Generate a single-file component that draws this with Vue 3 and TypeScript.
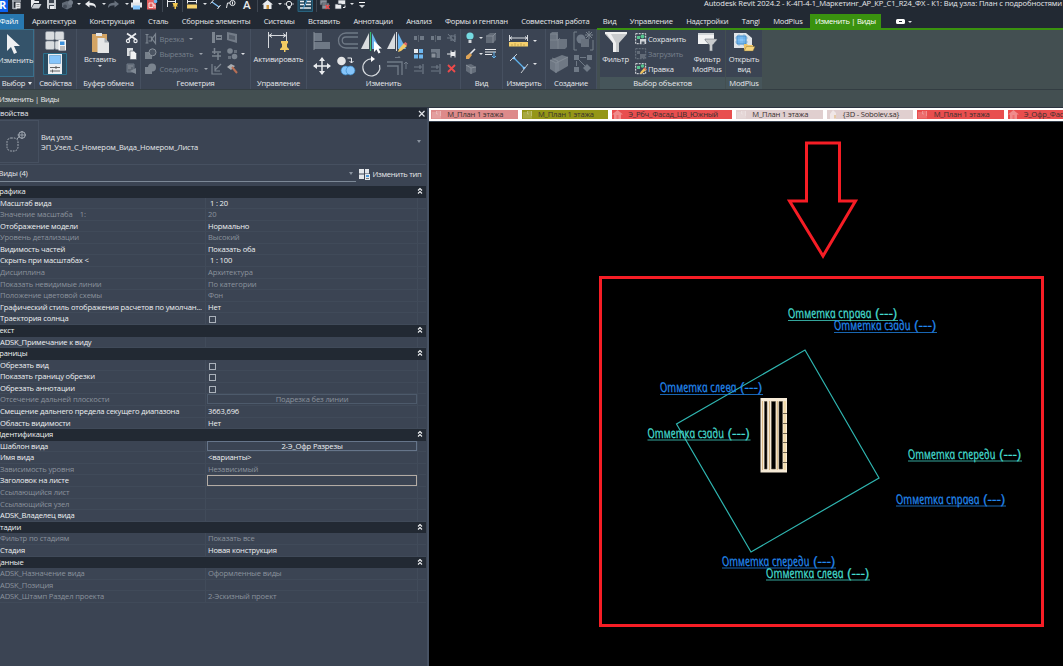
<script setup lang="ts">
import { h, type FunctionalComponent } from 'vue'

const W = '#e9ebee'
const G = '#6f7986'
const B = '#86c5fa'

interface Glyph { w: number; h: number; d: string }

const glyphs: Record<string, Glyph> = {
  doc: { w: 10, h: 12, d: `<path d="M0 1h9M1 0v9M1 8.500h4" stroke="#aab0b8" stroke-width="1.600" fill="none"/><path d="M3.500 2.500h5v6h-5z" fill="${W}"/><path d="M4.500 4.500h3M4.500 6.300h3" stroke="#555" stroke-width=".6"/>` },
  open: { w: 12, h: 12, d: `<path d="M1 8V0h3l1 1h4v2H4z" fill="${W}"/><path d="M4 4h7.500L9 8.500H1.500z" fill="#c5cad0"/>` },
  save: { w: 10, h: 12, d: `<path d="M0 0h9v9H1L0 8z" fill="#c9cdd2"/><path d="M2 0h5v3H2zM2 5h5v4H2z" fill="#3d4550"/><path d="M3 6h4v3H3z" fill="${W}"/>` },
  sync: { w: 12, h: 12, d: `<path d="M0 3l5-2 5 2v4L5 9.500 0 7z" fill="#626b77"/><circle cx="8.500" cy="2.500" r="2.500" fill="#737c88"/><circle cx="3" cy="6.500" r="2" fill="#444c58"/>` },
  undo: { w: 12, h: 12, d: `<path d="M0 4L4.500 .5v2.300C8 2.800 11 3.500 11 8 9.500 6 8 5.300 4.500 5.300v2.200z" fill="${W}"/>` },
  redo: { w: 12, h: 12, d: `<path d="M11 4L6.500 .5v2.300C3 2.800 0 3.500 0 8 1.500 6 3 5.300 6.500 5.300v2.200z" fill="#68717d"/>` },
  print: { w: 12, h: 12, d: `<path d="M2 0h7v3H2z" fill="#f3f4f5"/><path d="M0 2.500h11v5H0z" fill="#e3e5e8"/><path d="M2 5.500h7v4H2z" fill="${B}"/>` },
  pdf: { w: 11, h: 12, d: `<path d="M0 0h9v9.500H0z" fill="#e35e5e"/><path d="M2 3h4v4.500H2zM6 5h2v3" stroke="#fff" stroke-opacity=".8" fill="none"/><circle cx="8.500" cy="1.500" r="1.800" fill="#68b7f3"/>` },
  qdim: { w: 12, h: 12, d: `<path d="M.5 0v7M8.500 0v3M1 1.500h7" stroke="${W}" fill="none"/><path d="M5.500 3h5.500l-1 2.500 1 1H9v2.500H7.500V6.500H5.500l1-1z" fill="#f1c64d"/>` },
  qmeas: { w: 12, h: 12, d: `<path d="M.5 0v3.500M9.500 0v3.500M1 1.500h8" stroke="${W}"/><path d="M0 4.500h10v4H0z" fill="#f4d06b"/>` },
  qline: { w: 12, h: 12, d: `<path d="M2 2l7 5" stroke="${B}" stroke-width="1.200"/><path d="M3.500 0L.5 3.500M10.500 5L7.500 9" stroke="${W}"/>` },
  qtag: { w: 12, h: 12, d: `<circle cx="6.500" cy="3" r="2.600" stroke="${W}" fill="none"/><path d="M6.500 1.500v3M.5 8l1-5h2.500" stroke="${W}" fill="none"/>` },
  qhome: { w: 12, h: 12, d: `<path d="M5.500 0L0 4.500h1.500v4.500h8V4.500H11z" fill="${W}"/><path d="M4.500 5H7v4H4.500z" fill="#cf963d"/>` },
  qsec: { w: 10, h: 12, d: `<circle cx="4" cy="4" r="2.700" stroke="${W}" fill="none"/><path d="M-1 4h2M7 4h2M2.500 7h3L4 9.500z" fill="${W}" stroke="${W}" stroke-width=".7"/>` },
  qthin: { w: 15, h: 12, d: `<path d="M0 0h14.500v11.500H0z" fill="#1f4358" stroke="#28627d"/><path d="M2 1.500h4M9 1.500h4M2 4.500h4M8 4.500h5M2 8h11" stroke="${W}" stroke-width="1.400"/><path d="M9 0L5 9" stroke="#5ba9df"/>` },
  qclose: { w: 12, h: 12, d: `<path d="M0 0h7v5H0zM2 3h7v6H2z" fill="#8b929b" stroke="#353d48" stroke-width=".6"/><path d="M5.500 5l4 4M9.500 5l-4 4" stroke="#ea4848" stroke-width="1.400"/>` },
  qswitch: { w: 12, h: 12, d: `<path d="M3 0h7.500v4.500H3zM0 4h6.500v5H0z" fill="${W}" stroke="#353d48" stroke-width=".7"/><path d="M8 7.500h2V5.500" stroke="${W}" fill="none"/>` },
  cursor: { w: 16, h: 22, d: `<path d="M1 1v17l4-4 3 7 3-1.500-3-6.500h6z" fill="#eef0f2"/>` },
  types: { w: 22, h: 20, d: `<g fill="#d9dcdf" stroke="#858d97" stroke-width=".6"><rect x=".5" y=".5" width="9" height="8.500" rx="1.500"/><rect x="10" y=".5" width="9" height="8.500" rx="1.500"/><rect x=".5" y="10" width="9" height="8.500" rx="1.500"/><rect x="10" y="10" width="9" height="8.500" rx="1.500"/></g><path d="M13.500 9h7.500v10.500h-7.500z" fill="#f4f5f6"/><path d="M15 10.500h4.500v3.500H15z" fill="#3d91dc"/><path d="M15 16h5M15 18h5" stroke="#555" stroke-width=".7"/>` },
  props: { w: 24, h: 22, d: `<path d="M.5.5h23v21H.5z" fill="#294b60" stroke="#2c718e"/><path d="M5 1h14v20H5z" fill="#eceef0"/><path d="M6.500 2.500h11v8h-11z" fill="${B}" stroke="#4385ba" stroke-width=".5"/><path d="M7 14.500h10M7 18h10M13 13v3M9.500 16.500v3" stroke="#555" stroke-width=".9"/>` },
  paste: { w: 19, h: 22, d: `<path d="M1 2h15v18H1z" fill="#d3a464"/><path d="M5 1h6v3H5z" fill="#e4e6e8"/><path d="M6.500 6h7l4.500 4.500V21H6.500z" fill="#e5e6e7"/><path d="M13.500 6v4.500H18" fill="#aab0b7"/>` },
  cut: { w: 12, h: 12, d: `<path d="M1 1.500l9 6M10 1.500L2 7.500" stroke="${W}" stroke-width="1.700"/><circle cx="2" cy="9" r="1.600" stroke="${W}" stroke-width="1.200" fill="none"/><circle cx="9.500" cy="9" r="1.600" stroke="${W}" stroke-width="1.200" fill="none"/>` },
  copy2: { w: 12, h: 12, d: `<path d="M1 0h6v8H1z" fill="#d9dcdf"/><path d="M4 3h4l2.500 2.500V11.500H4z" fill="#f1f2f3" stroke="#59626e" stroke-width=".7"/>` },
  match: { w: 12, h: 12, d: `<path d="M1 1h7v8H1z" fill="#5d6672" stroke="${G}"/><path d="M4 8l6-3v6z" fill="#818a95"/><path d="M2 3h5M2 5h3" stroke="#a2a8b0" stroke-width=".7"/>` },
  cope: { w: 12, h: 12, d: `<path d="M.5 1.500h3M.5 10h3M2 1.500V10M3.500 4h3v4h-3M10.500 1L7 5.800l3.500 4.700z" stroke="#7c8590" stroke-width="1.200" fill="none"/>` },
  boolCut: { w: 12, h: 12, d: `<path d="M0 4h7v7H0z" fill="#78818c"/><circle cx="7.500" cy="4.300" r="3.500" fill="#4b5462" stroke="#8b939d"/>` },
  join: { w: 12, h: 12, d: `<path d="M0 4h7v7H0z" fill="#7b848f"/><circle cx="7" cy="4.500" r="4" fill="#7b848f"/>` },
  wall: { w: 12, h: 12, d: `<path d="M1 0h3v11H1zM5 3h6v5H5z" fill="#7b848f"/><path d="M10 5.500H6" stroke="#3b4453"/>` },
  face: { w: 12, h: 12, d: `<path d="M0 0l10 2v9L0 8z" fill="#737c88"/><path d="M2 2.500l6 1.500v4L2 7z" fill="#555e6b"/>` },
  beam: { w: 12, h: 12, d: `<path d="M1 4h9M1 8h9M3.500 0v6M7 5v7" stroke="#7b848f" stroke-width="1.500"/>` },
  paint: { w: 12, h: 12, d: `<circle cx="3" cy="3" r="2.800" fill="#7b848f"/><circle cx="7.500" cy="8.500" r="2.800" fill="#7b848f"/><path d="M7 2h3v3H7zM1 8h3v3H1z" fill="#67707c"/>` },
  split: { w: 12, h: 12, d: `<path d="M1 1v10h10M4 7l6-6M4 3v5h5" stroke="#7b848f" stroke-width="1.200" fill="none"/>` },
  hammer: { w: 12, h: 12, d: `<path d="M0 4l4-3 4 2-4 4z" fill="#a9adb1"/><path d="M5 4l5 6" stroke="#b86f54" stroke-width="2"/>` },
  activate: { w: 24, h: 22, d: `<path d="M1.500 1v16M19.500 1v10M2 4.500h17M5 2.500L2 4.500 5 6.500M16 2.500l3 2-3 2" stroke="#d5d8dc" fill="none"/><path d="M14 10h7v2l-1 1v3l2 2v1h-3.500v2h-1.500v-2H13v-1l2-2v-3l-1-1z" fill="#f2cb62"/>` },
  align: { w: 18, h: 18, d: `<path d="M1 1h8v8H1zM1 10h16v7H1z" fill="${G}"/><path d="M1 0v18" stroke="#89919b"/>` },
  offset: { w: 22, h: 18, d: `<path d="M21 1H9C-1 1-1 16 9 16h12M21 5H9c-5 0-5 7 0 7h12" stroke="${G}" stroke-width="1.300" fill="none"/>` },
  mirror: { w: 22, h: 22, d: `<path d="M8 1v16H0z" fill="#d9dcdf"/><path d="M11 1v16h8z" fill="#6bb4ee"/><path d="M9.500 0v19" stroke="#38bf70" stroke-width="1.200"/><path d="M13 9v11l2.500-2.500 2 4 2-1-2-4h3.500z" fill="#fff"/>` },
  mirrorDraw: { w: 22, h: 22, d: `<path d="M8 1v16H0z" fill="#d9dcdf"/><path d="M11 1v16h8z" fill="#6bb4ee"/><path d="M9.500 0v19" stroke="#d9dcdf"/><path d="M17 11l3 3-6 5-3 1 1-3z" fill="#f3ca66"/><path d="M16.500 11.500l2-1.500 2 2-1.500 1.500z" fill="#e46767"/>` },
  move: { w: 18, h: 20, d: `<path d="M9 2v16M1 10h16" stroke="${W}" stroke-width="1.500"/><path d="M6 5l3-4 3 4zM6 15l3 4 3-4zM4 7l-4 3 4 3zM14 7l4 3-4 3z" fill="${W}"/>` },
  copy: { w: 20, h: 20, d: `<circle cx="4.500" cy="5" r="4.300" fill="#e4e5e6"/><circle cx="8.500" cy="14.500" r="4.400" fill="${B}" stroke="#3b8bc8" stroke-width=".7"/><circle cx="13.500" cy="14.500" r="4.400" fill="${B}" stroke="#3b8bc8" stroke-width=".7"/><path d="M10.500 2h4v5M12.500 5l2 2 2-2" stroke="${W}" fill="none"/>` },
  rotate: { w: 22, h: 22, d: `<path d="M11 3A8.500 8.500 0 1 0 18.500 9" stroke="#d8dce0" stroke-width="1.200" fill="none"/><path d="M10 0l4 3-4 3z" fill="#fff"/>` },
  trim: { w: 22, h: 20, d: `<path d="M0 6h15v13M0 10h11v9" stroke="${G}" stroke-width="1.400" fill="none"/><path d="M8 1.500h5l-1.500-1.500M19 13V6l-2 2M19 6l2 2" stroke="${G}" fill="none"/>` },
  splitA: { w: 12, h: 12, d: `<path d="M1 4h3v4H1zM7 4h4v4H7z" fill="${G}"/><path d="M5.500 3v7" stroke="#59626e"/>` },
  unpin: { w: 12, h: 12, d: `<path d="M1 6h4M5 3v6M5 4h4v4H5M9 2v8M2 2l7 8" stroke="${G}" fill="none"/>` },
  array: { w: 12, h: 12, d: `<path d="M1 1h4v4H1z" fill="${W}"/><path d="M6 1h4v4H6zM1 6.500h4v4H1zM6 6.500h4v4H6z" fill="#6fb7ef"/>` },
  scale: { w: 12, h: 12, d: `<path d="M1 1h9v9H1z" fill="${G}"/><path d="M1 5h5v5H1z" fill="#89919b" stroke="#3b4453"/>` },
  pin: { w: 12, h: 12, d: `<path d="M1 6h4M5 2.500v7M9 2.500v7" stroke="${W}"/><path d="M5 4h4v4H5z" fill="${W}"/>` },
  ext: { w: 12, h: 12, d: `<path d="M10 1v10M1 4h8M1 8h8M7 2v4" stroke="${G}" stroke-width="1.200"/>` },
  del: { w: 12, h: 12, d: `<path d="M2 2l7 7M9 2L2 9" stroke="#ed4a4a" stroke-width="1.800"/>` },
  bulb: { w: 12, h: 12, d: `<circle cx="5" cy="4" r="3.600" fill="#75dbe2"/><path d="M3.500 8h3v3h-3z" fill="#d4d7db"/>` },
  cube: { w: 12, h: 12, d: `<path d="M1 4l4-3h6v7l-3 3H1z" fill="#626b77"/><path d="M1 4h7v7M8 4l3-3" stroke="#848c97" fill="none"/>` },
  brush: { w: 12, h: 12, d: `<path d="M10 1L5 6" stroke="${W}" stroke-width="1.600"/><path d="M5 5L1 8v3h3l3-4z" fill="#dfa456"/>` },
  lines: { w: 12, h: 12, d: `<path d="M0 1.500h11M0 4h11M0 6.500h7" stroke="${W}" stroke-width="1.100"/><path d="M9 4v6M7 8l2 2 2-2" stroke="#63b1eb" fill="none"/>` },
  box: { w: 12, h: 12, d: `<path d="M1 2l5-1 5 3v5l-5 2-5-3z" fill="#656e7a"/><path d="M1 2l5 3 5-1M6 5v6" stroke="#88909a" fill="none"/>` },
  measure: { w: 20, h: 20, d: `<path d="M.5 4v6M18.500 4v6M1 7h17M3 5.500L1 7l2 1.500M16 5.500L18 7l-2 1.500" stroke="#d9dce0" fill="none"/><path d="M0 11h19v4.500H0z" fill="#f5d06d"/><path d="M3 13v2.500M6 12v3.500M9 13v2.500M12 12v3.500M15 13v2.500" stroke="#a1873a" stroke-width=".6"/>` },
  dimline: { w: 20, h: 22, d: `<path d="M5 5l10 10" stroke="#5eb4ee" stroke-width="1.300"/><path d="M8 1L1 8M19 11l-7 9" stroke="#c9cdd2"/><circle cx="5" cy="5" r="1.300" fill="${B}"/><circle cx="15" cy="15" r="1.300" fill="${B}"/>` },
  group: { w: 20, h: 20, d: `<path d="M1 3l2-2h6v7h9v8l-2 2H1z" fill="#6b7480"/><path d="M1 9h8v9M9 9l2-2M1 3h7v6" stroke="#858d97" fill="none" stroke-width=".7"/>` },
  similar: { w: 21, h: 20, d: `<path d="M4 1H1v18h3M17 19h3V9" stroke="#77808b" fill="none"/><circle cx="8" cy="8" r="4.500" fill="${G}"/><path d="M8 8h8v8H8z" fill="#68717d"/><path d="M16 0v8M12 4h8M13 1l6 6M19 1l-6 6" stroke="#7b848f"/>` },
  assembly: { w: 20, h: 20, d: `<path d="M1 6l12-5 6 2v9L7 19l-6-4z" fill="#6f7884"/><path d="M1 6l6 3 12-6M7 9v10M3 4l6 3v10" stroke="#8b939d" stroke-width=".7" fill="none"/>` },
  parts: { w: 20, h: 20, d: `<path d="M1 1h5v5H1zM14 1h5v5h-5zM1 13h5v5H1zM14 10l4 4-4 4-4-4z" fill="${G}"/><path d="M7 3.500h6M3.500 7v5M5 5l7 7" stroke="${G}"/>` },
  funnel: { w: 22, h: 22, d: `<path d="M0 1h22v2l-8 9v9H8v-9L0 3z" fill="#c9cbcd"/><path d="M8 12L2 3h4l5 9v9H8z" fill="#efeff0"/><path d="M0 1h22v2H0z" fill="#f0f0f0"/>` },
  selSave: { w: 11, h: 12, d: `<path d="M.7.7h10v10H.7z" stroke="${W}" stroke-dasharray="2 1" fill="none"/><path d="M2 3h3v3H2z" fill="#57c38e"/><circle cx="7.500" cy="3.500" r="2" fill="#57c38e"/><path d="M5 6h6v5H5z" fill="#cfd3d8"/><path d="M6.500 8.500h3V11h-3z" fill="#4b5562"/>` },
  selLoad: { w: 11, h: 12, d: `<path d="M.7.7h10v10H.7z" stroke="${G}" stroke-dasharray="2 1" fill="none"/><path d="M2 3h3v3H2zM5 6h5v4H5z" fill="#626b77"/>` },
  selEdit: { w: 11, h: 12, d: `<path d="M.7.7h10v10H.7z" stroke="${W}" stroke-dasharray="2 1" fill="none"/><path d="M2 3h3v3H2z" fill="#57c38e"/><circle cx="7.500" cy="3" r="1.800" fill="#57c38e"/><path d="M9.500 4.500l2 2-4.500 4-2 .5.500-2z" fill="#f0c25c"/><path d="M9.500 4.500l2 2-1 .8-2-2z" fill="#e15d5d"/>` },
  funnelMod: { w: 19, h: 22, d: `<path d="M0 2h16v11H0z" fill="#f1f2f3"/><path d="M0 2h16v2H0z" fill="#d0d4d8"/><path d="M7 8h12v1l-4.500 5v6h-3v-6L7 9z" fill="#c9cbcd" stroke="#555e6b" stroke-width=".5"/>` },
  openView: { w: 22, h: 22, d: `<path d="M1 2h12l6 5v10H1z" fill="#e0e4e8"/><path d="M4 5h9v8H4z" fill="${B}" stroke="#3b86c5"/><path d="M2 7h13M2 11h13M6 3v12M11 3v12" stroke="#4f97cf" stroke-width=".5"/><path d="M11 19v-6h3l1 1h5v2z" fill="#efc567"/><path d="M11 20l2.500-4.500H22L20 20z" fill="#f7d57c" stroke="#7c6632" stroke-width=".4"/>` },
  typeEdit: { w: 12, h: 12, d: `<path d="M0 1h5v4.500H0zM6 1h4v4.500H6zM0 6.500h5V11H0zM6 6h5v6H6z" fill="#e3e6e9"/><path d="M7 7h3v2H7z" fill="#4a96d6"/><path d="M7 10.500h3" stroke="#777"/>` },
  callout: { w: 22, h: 24, d: `<rect x="2" y="8" width="11" height="13" rx="4" stroke="#aab1ba" stroke-dasharray="1.800 1" fill="none"/><path d="M12 9l2.500-3" stroke="#aab1ba"/><circle cx="17" cy="5" r="3.300" stroke="#aab1ba" fill="none"/><path d="M12.500 5H21M17 1v8" stroke="#aab1ba" stroke-width=".8"/>` },
  plan: { w: 11, h: 9, d: `<path d="M1 2h4v6.500H1zM5 1h5v7.500H5z" fill="#fff" fill-opacity=".18"/><path d="M5.500 1v3h1.500M9.500 1v5" stroke="#fff" stroke-opacity=".3" stroke-width=".8" fill="none"/>` },
  elev: { w: 11, h: 9, d: `<path d="M5.500 0L0 4.500h2V9h7V4.500h2z" fill="#fff" fill-opacity=".35"/><path d="M4.500 5h2v4h-2z" fill="#e95b5b" fill-opacity=".6"/>` },
  three: { w: 11, h: 9, d: `<path d="M6 0L3 4v5h6V3z" fill="#fff" fill-opacity=".5"/><path d="M7 5h2v3.500H7z" fill="#e3c396" fill-opacity=".8"/>` },
}

const Ico: FunctionalComponent<{ n: string }> = (p) => {
  const g = glyphs[p.n]
  return h('svg', { class: 'ico', width: g.w, height: g.h, viewBox: `0 0 ${g.w} ${g.h}`, innerHTML: g.d })
}
Ico.props = ['n']

const quick: string[] = ['doc', 'open', 'save', 'sync', '>', 'undo', '>', 'redo', '>', 'print', 'pdf', '|', 'qdim', '|', 'qmeas', '>', 'qline', 'qtag', 'A', '|', 'qhome', '>', 'qsec', 'qthin', '|', 'qclose', 'qswitch', '>', '=']

const tabs: string[] = ['Архитектура', 'Конструкция', 'Сталь', 'Сборные элементы', 'Системы', 'Вставить', 'Аннотации', 'Анализ', 'Формы и генплан', 'Совместная работа', 'Вид', 'Управление', 'Надстройки', 'Tangl', 'ModPlus']

const geometry = [
  { icon: 'cope', text: 'Врезка' },
  { icon: 'boolCut', text: 'Вырезать' },
  { icon: 'join', text: 'Соединить' },
]
const modifyBig = ['align', 'offset', 'mirror', 'mirrorDraw', 'move', 'copy', 'rotate', 'trim']
const modifySmall = ['splitA', 'splitA', 'unpin', 'array', 'scale', 'pin', 'ext', 'ext', 'del']

interface Row { k: string; v?: string; kind?: 'head' | 'check' | 'button' | 'input'; off?: boolean; pad?: boolean }
const rows: Row[] = [
  { k: 'Графика', kind: 'head' },
  { k: 'Масштаб вида', v: '1 : 20', pad: true },
  { k: 'Значение масштаба    1:', v: '20', off: true },
  { k: 'Отображение модели', v: 'Нормально' },
  { k: 'Уровень детализации', v: 'Высокий', off: true },
  { k: 'Видимость частей', v: 'Показать оба' },
  { k: 'Скрыть при масштабах <', v: '1 : 100', pad: true },
  { k: 'Дисциплина', v: 'Архитектура', off: true },
  { k: 'Показать невидимые линии', v: 'По категории', off: true },
  { k: 'Положение цветовой схемы', v: 'Фон', off: true },
  { k: 'Графический стиль отображения расчетов по умолчан...', v: 'Нет' },
  { k: 'Траектория солнца', kind: 'check' },
  { k: 'Текст', kind: 'head' },
  { k: 'ADSK_Примечание к виду' },
  { k: 'Границы', kind: 'head' },
  { k: 'Обрезать вид', kind: 'check' },
  { k: 'Показать границу обрезки', kind: 'check' },
  { k: 'Обрезать аннотации', kind: 'check' },
  { k: 'Отсечение дальней плоскости', v: 'Подрезка без линии', kind: 'button', off: true },
  { k: 'Смещение дальнего предела секущего диапазона', v: '3663,696' },
  { k: 'Область видимости', v: 'Нет' },
  { k: 'Идентификация', kind: 'head' },
  { k: 'Шаблон вида', v: '2-Э_Офр Разрезы', kind: 'button' },
  { k: 'Имя вида', v: '<варианты>' },
  { k: 'Зависимость уровня', v: 'Независимый', off: true },
  { k: 'Заголовок на листе', kind: 'input' },
  { k: 'Ссылающийся лист', off: true },
  { k: 'Ссылающийся узел', off: true },
  { k: 'ADSK_Владелец вида' },
  { k: 'Стадии', kind: 'head' },
  { k: 'Фильтр по стадиям', v: 'Показать все', off: true },
  { k: 'Стадия', v: 'Новая конструкция' },
  { k: 'Данные', kind: 'head' },
  { k: 'ADSK_Назначение вида', v: 'Оформленные виды', off: true },
  { k: 'ADSK_Позиция', off: true },
  { k: 'ADSK_Штамп Раздел проекта', v: '2-Эскизный проект', off: true },
]

const views = [
  { t: 'М_План 1 этажа', c: 'pink', i: 'plan' },
  { t: 'М_План 1 этажа', c: 'olive', i: 'plan' },
  { t: 'Э_Рбч_Фасад_ЦВ_Южный', c: 'red wide', i: 'elev' },
  { t: 'М_План 1 этажа', c: 'pale', i: 'plan' },
  { t: '{3D - Sobolev.sa}', c: 'pale', i: 'three' },
  { t: 'М_План 1 этажа', c: 'red', i: 'plan' },
  { t: 'Э_Офр_Фасад_ЦВ', c: 'red last', i: 'elev' },
]

const CY = '#45dccf'
const BL = '#2288ee'
const marks = [
  { t: 'справа', x: 788, y: 318, w: 110, c: CY },
  { t: 'сзади', x: 834, y: 330, w: 103, c: BL },
  { t: 'слева', x: 660, y: 392, w: 103, c: BL },
  { t: 'сзади', x: 647.500, y: 437.500, w: 103, c: CY },
  { t: 'спереди', x: 908, y: 458.500, w: 114, c: CY },
  { t: 'справа', x: 896, y: 503.500, w: 110, c: BL },
  { t: 'спереди', x: 722, y: 565.500, w: 114, c: BL },
  { t: 'слева', x: 766, y: 577.500, w: 104, c: CY },
]
</script>

<template>
  <div class="app">
    <header class="title">
      <b class="logo">R</b>
      <div class="quick">
        <template v-for="(q, i) in quick" :key="i">
          <i v-if="q === '>'" class="caret" />
          <i v-else-if="q === '|'" class="sep" />
          <span v-else-if="q === 'A'" class="letter">A</span>
          <i v-else-if="q === '='" class="more" />
          <Ico v-else :n="q" />
        </template>
      </div>
      <span class="caption">Autodesk Revit 2024.2 - К-4П-4-1_Маркетинг_АР_КР_С1_R24_ФХ - К1: Вид узла: План с подробностями</span>
    </header>

    <nav class="tabs">
      <span class="file">Файл</span>
      <span v-for="t in tabs" :key="t">{{ t }}</span>
      <span class="active">Изменить | Виды</span>
      <span class="cam"><i class="pill" /><i class="caret" /></span>
    </nav>

    <section class="ribbon">
      <div class="panel p1">
        <div class="body sel"><Ico n="cursor" /><span class="lb">Изменить</span></div>
        <footer>Выбор <i class="caret" /></footer>
      </div>
      <div class="panel p2">
        <div class="body stack"><Ico n="types" /><Ico n="props" /></div>
        <footer>Свойства</footer>
      </div>
      <div class="panel p3">
        <div class="body row">
          <div class="big"><Ico n="paste" /><span class="lb">Вставить</span><i class="caret" /></div>
          <div class="col"><Ico n="cut" /><Ico n="copy2" /><Ico n="match" /></div>
        </div>
        <footer>Буфер обмена</footer>
      </div>
      <div class="panel p4">
        <div class="body row">
          <div class="list">
            <span v-for="g in geometry" :key="g.text" class="item off"><Ico :n="g.icon" />{{ g.text }}<i class="caret" /></span>
          </div>
          <div class="col"><Ico n="wall" /><Ico n="beam" /><Ico n="split" /></div>
          <div class="col"><Ico n="face" /><span class="pair"><Ico n="paint" /><i class="caret" /></span><Ico n="hammer" /></div>
        </div>
        <footer>Геометрия</footer>
      </div>
      <div class="panel p5">
        <div class="body big"><Ico n="activate" /><span class="lb">Активировать</span></div>
        <footer>Управление</footer>
      </div>
      <div class="panel p6">
        <div class="body row">
          <div class="bigs"><Ico v-for="m in modifyBig" :key="m" :n="m" /></div>
          <div class="smalls"><Ico v-for="(m, i) in modifySmall" :key="i" :n="m" /></div>
        </div>
        <footer>Изменить</footer>
      </div>
      <div class="panel p7">
        <div class="body row">
          <div class="col"><span class="pair"><Ico n="bulb" /><i class="caret" /></span><span class="pair"><Ico n="brush" /><i class="caret" /></span><Ico n="box" /></div>
          <div class="col"><Ico n="cube" /><Ico n="lines" /></div>
        </div>
        <footer>Вид</footer>
      </div>
      <div class="panel p8">
        <div class="body stack2">
          <span class="pair"><Ico n="measure" /><i class="caret" /></span>
          <span class="pair"><Ico n="dimline" /><i class="caret" /></span>
        </div>
        <footer>Измерить</footer>
      </div>
      <div class="panel p9">
        <div class="body create"><Ico n="group" /><Ico n="similar" /><Ico n="assembly" /><Ico n="parts" /></div>
        <footer>Создание</footer>
      </div>
      <div class="panel ctx p10">
        <div class="body row">
          <div class="big"><Ico n="funnel" /><span class="lb">Фильтр</span></div>
          <div class="list">
            <span class="item"><Ico n="selSave" />Сохранить</span>
            <span class="item off"><Ico n="selLoad" />Загрузить</span>
            <span class="item"><Ico n="selEdit" />Правка</span>
          </div>
          <div class="big mod"><Ico n="funnelMod" /><span class="lb">Фильтр<br>ModPlus</span></div>
        </div>
        <footer>Выбор объектов</footer>
      </div>
      <div class="panel ctx p11">
        <div class="body big"><Ico n="openView" /><span class="lb">Открыть<br>вид</span></div>
        <footer>ModPlus</footer>
      </div>
    </section>

    <div class="options">Изменить | Виды</div>

    <main class="work">
      <aside class="props">
        <div class="phead"><span>Свойства</span><svg width="8" height="8" viewBox="0 0 8 8"><path d="M1 1l5.500 5.500M6.500 1L1 6.500" stroke="#e3e6ea" stroke-width="1.200" /></svg></div>
        <div class="ptype">
          <div class="thumb"><Ico n="callout" /></div>
          <div class="tname">Вид узла<br>ЭП_Узел_С_Номером_Вида_Номером_Листа</div>
          <i class="caret dim" />
        </div>
        <div class="pfilter">
          <div class="combo"><span>Виды (4)</span><i class="caret dim" /></div>
          <div class="edit"><Ico n="typeEdit" />Изменить тип</div>
        </div>
        <div class="grid">
          <div v-for="(r, i) in rows" :key="i" class="prow" :class="[r.kind, { off: r.off }]">
            <template v-if="r.kind === 'head'">
              <span class="hk">{{ r.k }}</span>
              <svg width="6" height="8" viewBox="0 0 6 8"><path d="M1 3.500L3 1.500l2 2M1 6.500l2-2 2 2" stroke="#f0f2f4" stroke-width="1.100" fill="none" /></svg>
            </template>
            <template v-else>
              <span class="k">{{ r.k }}</span>
              <span class="v" :class="{ pad: r.pad }">
                <i v-if="r.kind === 'check'" class="box" />
                <span v-else-if="r.kind === 'button'" class="btn">{{ r.v }}</span>
                <span v-else-if="r.kind === 'input'" class="inp" />
                <template v-else>{{ r.v }}</template>
              </span>
              <span class="e" />
            </template>
          </div>
        </div>
      </aside>

      <section class="canvas">
        <div class="vtabs">
          <span v-for="(v, i) in views" :key="i" class="vtab" :class="v.c"><Ico :n="v.i" /><em>{{ v.t }}</em></span>
        </div>
        <svg class="draw" width="634" height="544" viewBox="429 122 634 544">
          <path d="M806.500 143H839.500V201H855.500L823 256 789.500 201H806.500z" fill="none" stroke="#f61d25" stroke-width="3" />
          <rect x="600.500" y="277.500" width="442" height="348" fill="none" stroke="#f61d25" stroke-width="3" />
          <path d="M805 350L879 478 751 552 676.500 424z" fill="none" stroke="#2fb5b0" stroke-width="1.200" />
          <rect x="760.500" y="398" width="26.500" height="74.500" fill="#f6ead6" />
          <path d="M764.500 401.500V469H767V401.500zM771.500 401.500V469H775.500V401.500zM779 401.500V469H782.500V401.500z" fill="#000" stroke="#5b5245" stroke-width=".6" />
          <path d="M762.500 401V470M769.500 401V470M777.300 401V470" stroke="#d9b985" stroke-width="1" />
          <path d="M784.700 401V470" stroke="#f1d9a6" stroke-width="2.200" />
          <path d="M782.500 413.500h4.500M782.500 423.500h4.500M782.500 433.500h4.500M782.500 442.500h4.500M782.500 452.500h4.500M782.500 462.500h4.500" stroke="#6c6253" />
          <g v-for="(m, i) in marks" :key="i" :fill="m.c" :stroke="m.c">
            <text class="mark" :transform="`translate(${m.x + .8} ${m.y}) skewX(12)`" :textLength="m.w - 26.500" lengthAdjust="spacingAndGlyphs">Отметка {{ m.t }}</text>
            <text class="mark" :transform="`translate(${m.x + m.w - 22} ${m.y}) skewX(12)`" textLength="22" lengthAdjust="spacingAndGlyphs">(---)</text>
            <path :d="`M${m.x} ${m.y + 2.500}h${m.w}`" stroke-opacity=".75" stroke-width="1.200" />
          </g>
        </svg>
      </section>
    </main>
  </div>
</template>

<style>
body { margin: 0; background: #000; }
.ico { display: block; flex: none; overflow: visible; }
</style>

<style scoped>
.app { width: 1063px; height: 666px; overflow: hidden; display: flex; flex-direction: column; font: 7.6px/10px "Open Sans", "Noto Sans", sans-serif; letter-spacing: -0.2px; color: #e6e8eb; background: #3b4453; white-space: nowrap; }
.caret { display: inline-block; flex: none; width: 0; height: 0; border: 2px solid transparent; border-top: 2.500px solid #dfe2e6; border-bottom: 0; }
.caret.dim { border-top-color: #8a939f; border-width: 3px 2.500px 0; }

.title { height: 14px; flex: none; display: flex; background: #222933; }
.logo { width: 8px; height: 12px; flex: none; background: #0b62f0; color: #fff; font-size: 11px; line-height: 9px; text-indent: -1px; }
.quick { width: 359px; flex: none; box-sizing: border-box; padding-left: 4px; display: grid; height: 12px; align-items: start; justify-items: start; grid-template-columns: 18px 17px 15px 14px 9px 16px 7px 16px 7px 16px 15px 5px 15px 5px 15px 8px 16px 17px 14px 5px 15px 8px 13px 18px 4px 15px 14px 10px 6px; }
.quick .caret { margin: 3px 0 0 1px; }
.sep { width: 1px; height: 12px; background: #3e4651; }
.letter { font-size: 11.500px; line-height: 9px; font-weight: 600; }
.more { width: 6px; height: 2px; margin-top: 2px; border-top: 1px solid #fff; border-bottom: 3px solid #cfd3d8; clip-path: polygon(0 0, 100% 0, 100% 20%, 100% 50%, 50% 100%, 0 50%); }
.caption { margin-left: 337px; flex: none; font-size: 7.600px; line-height: 7px; letter-spacing: -0.1px; }

.tabs { height: 15px; flex: none; background: #222933; display: flex; align-items: stretch; gap: 13.350px; line-height: 15px; overflow: hidden; }
.file { width: 24px; background: #2878b0; margin-right: -5.350px; color: #fff; text-indent: -.5px; }
.active { background: #3a920f; color: #fff; padding: 0 5px; margin: 0 0 0 -6px; letter-spacing: -.28px; }
.cam { display: flex; align-items: center; gap: 3px; margin-left: 1.500px; }
.pill { width: 3px; height: 1px; border: 2px solid #fff; border-width: 2px 3px; border-radius: 1.500px; background: #222933; }

.ribbon { height: 61px; flex: none; display: flex; background: linear-gradient(90deg, #3b4453 597px, #434f51 597px); border-bottom: 1px solid #333d42; box-sizing: border-box; position: relative; }
.ribbon::after { content: ""; position: absolute; left: 597px; right: 0; top: -1px; height: 2px; background: #3a920f; }
.panel { box-sizing: border-box; flex: none; border-right: 1px solid #465060; display: flex; flex-direction: column; }
.panel footer { height: 12px; line-height: 13px; text-align: center; display: flex; justify-content: center; align-items: center; gap: 3px; }
.body { height: 48px; box-sizing: border-box; padding-top: 2px; display: flex; }
.p1 { width: 35px; } .p2 { width: 42px; } .p3 { width: 64px; } .p4 { width: 110px; } .p5 { width: 56px; }
.p6 { width: 154px; } .p7 { width: 42px; } .p8 { width: 43px; } .p9 { width: 51px; }
.p10 { width: 126px; margin-left: 3px; } .p11 { width: 37px; }
.ctx { border-right-color: #434f51; }
.ctx .body { background: #3b4453; }
.ctx footer { background: #46555a; }
.sel { background: #34536a; border: 1px solid #39708d; border-left: 0; flex-direction: column; align-items: center; }
.sel .ico { margin: 1px 0 0 -5px; }
.sel .lb { margin: 0 0 0 -2px; }
.p1 footer .caret { border-width: 3px 2.500px 0; }
.stack { flex-direction: column; align-items: center; gap: 2px; }
.stack .ico:last-child { margin-left: -1px; }
.big { display: flex; flex-direction: column; align-items: center; }
.big .lb { margin-top: 2px; line-height: 9.500px; text-align: center; }
.p3 .big { width: 46px; padding-top: 1px; }
.p3 .lb { margin-top: 1px; }
.col { display: flex; flex-direction: column; gap: 3.600px; padding-top: 1px; }
.p3 .col { margin-left: 3px; }
.list { display: flex; flex-direction: column; }
.item { height: 15.500px; display: flex; align-items: center; gap: 2.500px; }
.item .caret { margin-left: 3px; }
.off { color: #77808c; }
.off .caret { border-top-color: #9ba2ab; }
.p4 .list { width: 66px; padding-left: 4px; }
.p4 .col { width: 16px; }
.pair { display: flex; align-items: center; gap: 2px; }
.p6 .bigs { display: grid; grid-template-columns: 24px 24px 26px 25px; grid-template-rows: 23px 22px; padding: 1px 0 0 6px; }
.p6 .bigs .ico:nth-child(n+5) { margin-top: 1px; }
.p6 .smalls { display: grid; grid-template-columns: repeat(3, 16.500px); grid-template-rows: repeat(3, 15.600px); padding: 1px 0 0 1px; }
.p7 .col { width: 21px; }
.p7 .col + .col { margin-left: 2px; }
.p7 .row { padding-left: 4px; }
.stack2 { flex-direction: column; gap: 2px; padding-left: 6px; }
.stack2 .pair { gap: 4px; }
.p9 .create { display: grid; grid-template-columns: 24px 22px; grid-template-rows: 23px 22px; padding-left: 3px; }
.p10 .big { width: 31px; }
.p10 .list { width: 56px; padding-left: 4px; }
.p10 .item { gap: 2px; }
.p10 .mod { width: 34px; margin-left: -1px; }

.options { height: 18px; flex: none; background: #434f51; line-height: 18px; text-indent: -1px; letter-spacing: -.33px; border-bottom: 1px solid #2c3440; box-sizing: border-box; }

.work { flex: 1; display: flex; min-height: 0; }
.props { width: 429px; flex: none; box-sizing: border-box; border-right: 2px solid #475263; display: flex; flex-direction: column; overflow: hidden; }
.phead { height: 11px; background: #222933; display: flex; justify-content: space-between; align-items: center; line-height: 11px; padding-right: 1px; flex: none; }
.phead span { margin-left: -4.500px; }
.ptype { height: 45px; flex: none; display: flex; align-items: center; border-bottom: 1px solid #465060; margin-right: 1px; }
.thumb { width: 39px; height: 43px; box-sizing: border-box; border: 1px solid #465060; border-left: 0; display: flex; align-items: center; padding-left: 5px; }
.tname { margin-left: 2px; flex: 1; line-height: 10.400px; padding-top: 1px; letter-spacing: -.12px; }
.ptype .caret { margin-right: 5px; }
.pfilter { height: 20px; display: flex; flex: none; }
.combo { width: 356px; height: 17px; display: flex; justify-content: space-between; align-items: center; border-bottom: 1px solid #7c8896; box-sizing: border-box; padding-right: 3px; }
.combo span { margin-left: -1.500px; }
.edit { display: flex; align-items: center; gap: 1.500px; height: 17px; margin-left: 3px; letter-spacing: -.25px; }
.grid { padding-top: 1px; width: 426px; }
.prow { height: 11.590px; display: flex; line-height: 10px; box-sizing: border-box; border-bottom: 1px solid #404a59; font-weight: 500; color: #eef0f2; letter-spacing: -.17px; }
.prow.off { color: #8b939d; font-weight: 400; letter-spacing: -.14px; }
.prow.head { background: #222933; justify-content: space-between; align-items: center; padding-right: 3px; border-bottom-color: #222933; }
.hk { margin-left: -4.500px; }
.k { width: 206px; flex: none; box-sizing: border-box; border-right: 1px solid #414b5a; white-space: pre; }
.v { width: 212px; flex: none; box-sizing: border-box; padding-left: 2px; border-right: 1px solid #414b5a; display: flex; }
.v.pad { padding-left: 4px; }
.box { width: 7px; height: 7px; box-sizing: border-box; border: 1px solid #aab1ba; margin: 3px 0 0 1px; }
.btn, .inp { flex: 1; height: 10px; box-sizing: border-box; margin: 0 0 0 -1px; text-align: center; line-height: 8.500px; border: 1px solid #66758a; }
.off .btn { border-color: #4d5a6b; }
.inp { height: 11px; border-color: #b3aba4; }

.canvas { flex: 1; background: #000; min-width: 0; overflow: hidden; }
.vtabs { height: 14px; background: #fff; border-bottom: 1px solid #36404d; box-sizing: border-box; display: flex; gap: 4.200px; padding: 2px 0 0 2px; overflow: hidden; }
.vtab { width: 86.500px; height: 9px; flex: none; display: flex; line-height: 9px; color: #38302f; }
.vtab em { font-style: normal; flex: 1; text-align: center; margin-left: -9px; }
.wide { width: 119.500px; }
.last { width: 119.500px; }
.last em { text-align: left; margin-left: 4.500px; }
.pink { background: #dd8a8a; }
.olive { background: #949617; }
.red { background: #e84e4e; }
.pale { background: #e0cfcf; }
.draw { display: block; }
.mark { font: italic 13.500px "Open Sans", "Noto Sans", sans-serif; letter-spacing: 0; stroke-width: .25; }
</style>
